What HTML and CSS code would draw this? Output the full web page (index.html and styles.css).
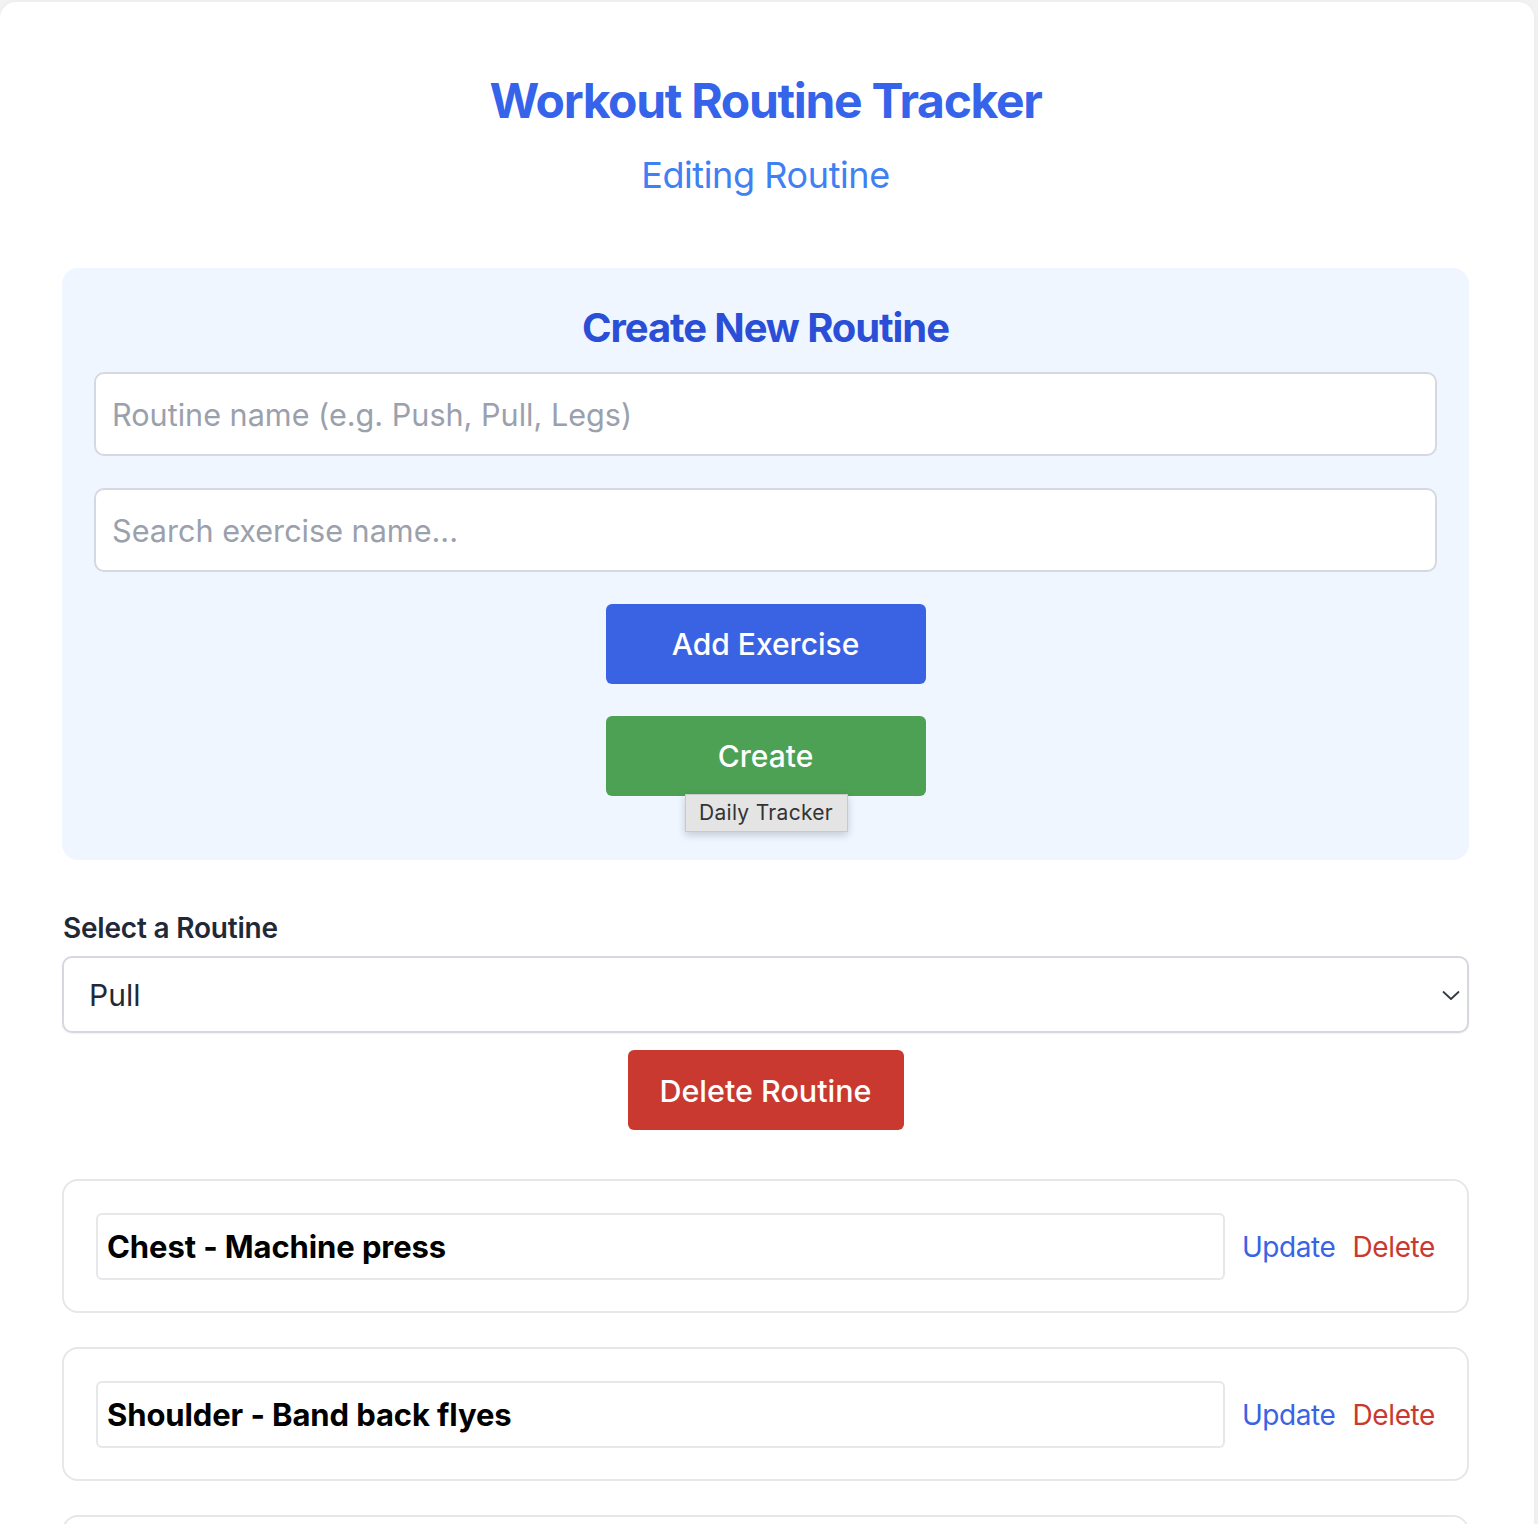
FILE: index.html
```html
<!DOCTYPE html>
<html lang="en">
<head>
<meta charset="utf-8">
<title>Workout Routine Tracker</title>
<link rel="stylesheet" href="styles.css">
</head>
<body>
<div class="page">
  <header class="header">
    <h1 class="title">Workout Routine Tracker</h1>
    <h2 class="subtitle">Editing Routine</h2>
  </header>

  <section class="create-card">
    <h3 class="create-title">Create New Routine</h3>
    <input class="field" type="text" placeholder="Routine name (e.g. Push, Pull, Legs)">
    <input class="field" type="text" placeholder="Search exercise name...">
    <button class="btn btn-blue">Add Exercise</button>
    <div class="create-wrap">
      <button class="btn btn-green">Create</button>
      <div class="tooltip">Daily Tracker</div>
    </div>
  </section>

  <section class="select-section">
    <label class="select-label">Select a Routine</label>
    <div class="select">
      <span class="select-value">Pull</span>
      <svg class="chevron" width="20" height="12" viewBox="0 0 20 12"><path d="M2.5 3 L10 10 L17.5 3" fill="none" stroke="#333a44" stroke-width="1.8" stroke-linecap="round" stroke-linejoin="round"/></svg>
    </div>
    <button class="btn btn-red">Delete Routine</button>
  </section>

  <ul class="exercise-list">
    <li class="exercise">
      <div class="exercise-name">Chest - Machine press</div>
      <a class="link link-update">Update</a>
      <a class="link link-delete">Delete</a>
    </li>
    <li class="exercise">
      <div class="exercise-name">Shoulder - Band back flyes</div>
      <a class="link link-update">Update</a>
      <a class="link link-delete">Delete</a>
    </li>
    <li class="exercise exercise-empty"></li>
  </ul>
</div>
</body>
</html>
```

FILE: styles.css
```css
* { box-sizing: border-box; }

html, body {
  margin: 0;
  padding: 0;
}

body {
  background: #f2f2f3;
  font-family: Inter, "Noto Sans", "Liberation Sans", sans-serif;
  color: #1f2937;
  overflow: hidden;
}

.page {
  background: #ffffff;
  margin: 2px 4px 0 0;
  border-radius: 16px 16px 0 0;
  box-shadow: 0 0 6px rgba(0,0,0,0.04);
  padding: 75px 65px 40px 62px;
  min-height: 1600px;
}

.header {
  text-align: center;
}

.title {
  margin: 0;
  font-size: 48px;
  line-height: 48px;
  font-weight: 700;
  color: #3563e9;
  letter-spacing: -1.3px;
}

.subtitle {
  margin: 30px 0 0;
  font-size: 36px;
  line-height: 40px;
  font-weight: 400;
  color: #3f80f2;
  letter-spacing: -0.4px;
}

.create-card {
  margin-top: 73px;
  background: #eff6ff;
  border-radius: 16px;
  padding: 32px 32px 64px;
  display: flex;
  flex-direction: column;
  align-items: center;
  gap: 32px;
}

.create-title {
  margin: 8px 0 -8px;
  font-size: 40px;
  line-height: 40px;
  font-weight: 700;
  color: #2a4fd6;
  letter-spacing: -1.1px;
}

.field {
  width: 100%;
  height: 84px;
  border: 2px solid #d5d9df;
  border-radius: 10px;
  background: #fff;
  padding: 0 16px;
  font-family: inherit;
  font-size: 30.6px;
  color: #1f2937;
  outline: none;
}

.field::placeholder {
  color: #9aa1ad;
}

.btn {
  border: none;
  border-radius: 6px;
  color: #fff;
  font-family: inherit;
  font-size: 30px;
  font-weight: 500;
  height: 80px;
  cursor: pointer;
}

.btn-blue {
  width: 320px;
  background: #3a63e4;
}

.create-wrap {
  position: relative;
  width: 320px;
}

.btn-green {
  width: 320px;
  background: #4ca155;
}

.tooltip {
  position: absolute;
  left: 79px;
  top: 78px;
  width: 163px;
  height: 38px;
  background: #e4e4e4;
  border: 1px solid #c9c9c9;
  box-shadow: 0 3px 8px rgba(0,0,0,0.18);
  font-size: 21px;
  line-height: 36px;
  color: #333;
  text-align: center;
  letter-spacing: 0.3px;
}

.select-section {
  margin-top: 50px;
  display: flex;
  flex-direction: column;
  align-items: center;
}

.select-label {
  align-self: flex-start;
  font-size: 28px;
  line-height: 36px;
  font-weight: 600;
  color: #1f2937;
  margin-left: 1px;
  letter-spacing: -0.2px;
}

.select {
  margin-top: 10px;
  width: 100%;
  height: 77px;
  border: 2px solid #d5d9df;
  border-radius: 10px;
  background: #fff;
  box-shadow: 0 1px 2px rgba(0,0,0,0.06);
  display: flex;
  align-items: center;
  justify-content: space-between;
  padding: 0 6px 0 25px;
}

.select-value {
  font-size: 30px;
  color: #1f2937;
}

.btn-red {
  margin-top: 17px;
  width: 276px;
  background: #c9392f;
  font-size: 30.5px;
}

.exercise-list {
  list-style: none;
  margin: 49px 0 0;
  padding: 0;
  display: flex;
  flex-direction: column;
  gap: 34px;
}

.exercise {
  border: 2px solid #e6e7eb;
  border-radius: 16px;
  padding: 32px;
  display: flex;
  align-items: center;
  gap: 17px;
  height: 134px;
}

.exercise-name {
  flex: 1;
  height: 67px;
  border: 2px solid #e6e7eb;
  border-radius: 6px;
  padding: 0 9px;
  margin-right: 0;
  display: flex;
  align-items: center;
  font-size: 31px;
  font-weight: 700;
  color: #000;
  letter-spacing: -0.1px;
}

.link {
  font-size: 28px;
  letter-spacing: -0.4px;
  line-height: 36px;
  padding-top: 2px;
  cursor: pointer;
}

.link-update { color: #3a63e4; }
.link-delete { color: #c9392f; }
```
